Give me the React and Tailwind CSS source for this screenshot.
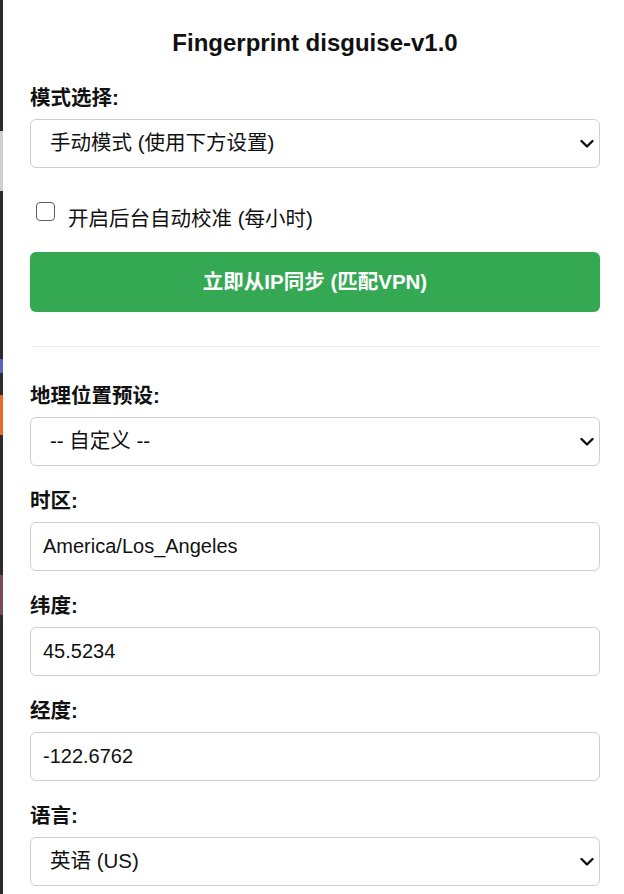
import React, { useState } from 'react';

const font = { fontFamily: '"Liberation Sans", "Noto Sans CJK SC", sans-serif' };

const Chevron = () => (
  <svg
    className="pointer-events-none absolute right-[6px] top-1/2 -translate-y-1/2"
    width="14"
    height="9"
    viewBox="0 0 14 9"
    fill="none"
  >
    <path d="M1.5 1.5 L7 7 L12.5 1.5" stroke="#111" strokeWidth="2.4" strokeLinecap="round" strokeLinejoin="round" />
  </svg>
);

const Field = ({ label, children, first }) => (
  <div className={first ? '' : 'mt-[20px]'}>
    <label className="block text-[20.5px] leading-[30px] font-bold text-[#111] mb-[6px]">{label}</label>
    {children}
  </div>
);

const SelectBox = ({ value, options, onChange }) => (
  <div className="relative h-[49px]">
    <select
      value={value}
      onChange={(e) => onChange(e.target.value)}
      className="appearance-none w-full h-full bg-white border border-[#cfcfcf] rounded-[6px] pl-[19px] pr-10 text-[20.5px] text-[#111] outline-none"
      style={font}
    >
      {options.map((o) => (
        <option key={o} value={o}>{o}</option>
      ))}
    </select>
    <Chevron />
  </div>
);

const TextBox = ({ value, onChange }) => (
  <input
    type="text"
    value={value}
    onChange={(e) => onChange(e.target.value)}
    className="block w-full h-[49px] bg-white border border-[#cfcfcf] rounded-[6px] px-[12px] text-[20px] text-[#111] outline-none"
    style={font}
  />
);

export default function App() {
  const [mode, setMode] = useState('手动模式 (使用下方设置)');
  const [auto, setAuto] = useState(false);
  const [preset, setPreset] = useState('-- 自定义 --');
  const [tz, setTz] = useState('America/Los_Angeles');
  const [lat, setLat] = useState('45.5234');
  const [lng, setLng] = useState('-122.6762');
  const [lang, setLang] = useState('英语 (US)');

  return (
    <div className="min-h-screen bg-white flex" style={font}>
      {/* page behind the popup */}
      <div className="w-[3px] shrink-0 flex flex-col bg-[#2c2c2c]">
        <div className="h-[131px]" />
        <div className="h-[60px] bg-[#cfcfcf]" />
        <div className="h-[168px]" />
        <div className="h-[14px] bg-[#5a62c8]" />
        <div className="h-[22px]" />
        <div className="h-[40px] bg-[#e8692a]" />
        <div className="h-[140px]" />
        <div className="h-[40px] bg-[#7a4a55]" />
      </div>

      <div className="flex-1 pl-[27px] pr-[24px] pt-[28px] pb-[20px]">
        <h1 className="text-center text-[24px] leading-[30px] font-bold text-[#111]">Fingerprint disguise-v1.0</h1>

        <div className="mt-[25px]">
          <Field label="模式选择:" first>
            <SelectBox
              value={mode}
              onChange={setMode}
              options={['手动模式 (使用下方设置)', '自动模式 (根据IP)']}
            />
          </Field>
        </div>

        <div className="flex items-start mt-[34px] pl-[6px]">
          <button
            type="button"
            onClick={() => setAuto(!auto)}
            className="w-[19px] h-[19px] shrink-0 border-[1.5px] border-[#5f5f5f] rounded-[4px] bg-white"
          />
          <span className="ml-[13px] mt-[2px] text-[20.5px] leading-[30px] text-[#111]">开启后台自动校准 (每小时)</span>
        </div>

        <button
          type="button"
          className="mt-[18px] w-full h-[60px] rounded-[6px] bg-[#34a853] text-white text-[20.5px] font-bold"
        >
          立即从IP同步 (匹配VPN)
        </button>

        <div className="mt-[34px] h-px bg-[#ececec] ml-[2px]" />

        <div className="mt-[34px]">
          <Field label="地理位置预设:" first>
            <SelectBox
              value={preset}
              onChange={setPreset}
              options={['-- 自定义 --', '美国 - 波特兰', '日本 - 东京']}
            />
          </Field>
          <Field label="时区:">
            <TextBox value={tz} onChange={setTz} />
          </Field>
          <Field label="纬度:">
            <TextBox value={lat} onChange={setLat} />
          </Field>
          <Field label="经度:">
            <TextBox value={lng} onChange={setLng} />
          </Field>
          <Field label="语言:">
            <SelectBox value={lang} onChange={setLang} options={['英语 (US)', '中文 (简体)', '日语']} />
          </Field>
        </div>
      </div>
    </div>
  );
}
